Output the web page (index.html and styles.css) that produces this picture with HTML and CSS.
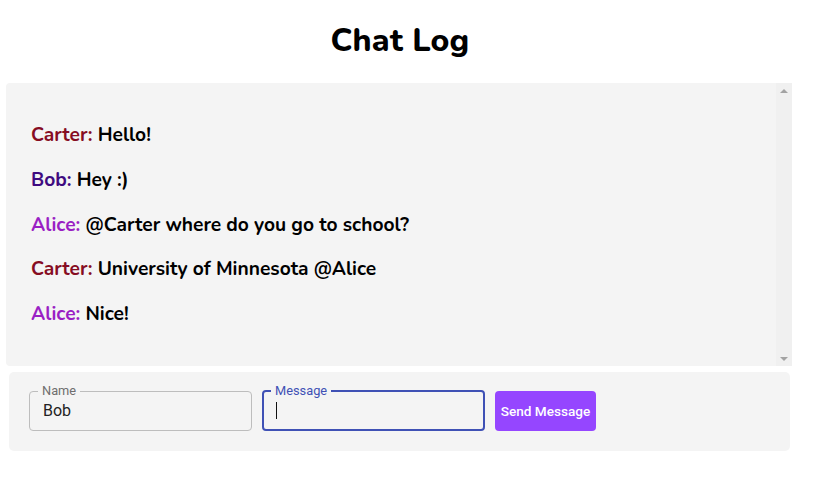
FILE: index.html
```html
<!DOCTYPE html>
<html>
<head>
<meta charset="utf-8">
<link rel="stylesheet" href="styles.css">
</head>
<body>
<div class="page">
  <h1 class="title">Chat Log</h1>
  <div class="log">
    <div class="messages">
      <p class="msg"><span class="who carter">Carter:</span> Hello!</p>
      <p class="msg"><span class="who bob">Bob:</span> Hey :)</p>
      <p class="msg"><span class="who alice">Alice:</span> @Carter where do you go to school?</p>
      <p class="msg"><span class="who carter">Carter:</span> University of Minnesota @Alice</p>
      <p class="msg"><span class="who alice">Alice:</span> Nice!</p>
    </div>
    <div class="scrollbar">
      <span class="arrow up"></span>
      <span class="arrow down"></span>
    </div>
  </div>
  <form class="composer">
    <fieldset class="field">
      <legend class="label">Name</legend>
      <span class="value">Bob</span>
    </fieldset>
    <fieldset class="field focused">
      <legend class="label">Message</legend>
      <span class="caret"></span>
    </fieldset>
    <button type="button" class="send">Send Message</button>
  </form>
</div>
</body>
</html>
```
FILE: styles.css
```css
html, body {
  margin: 0;
  padding: 0;
  background: #ffffff;
}
body {
  font-family: "Nunito", "Lato", "Noto Sans", sans-serif;
  color: #000;
}
.page {
  width: 800px;
  padding-top: 22px;
}
.title {
  margin: 0 0 24px 0;
  height: 37px;
  text-align: center;
  font-size: 32px;
  font-weight: 800;
  line-height: 37px;
  letter-spacing: 0.2px;
}
.log {
  margin-left: 6px;
  width: 786px;
  height: 283px;
  background: #f4f4f4;
  border-radius: 4px 0 0 4px;
  display: flex;
}
.messages {
  flex: 1;
  padding: 40px 0 0 25px;
}
.msg {
  margin: 0 0 20.75px 0;
  height: 24px;
  line-height: 24px;
  font-size: 19.2px;
  font-weight: 700;
}
.who.carter { color: #860c22; }
.who.bob { color: #3e0a80; }
.who.alice { color: #9a1fc4; }
.scrollbar {
  width: 16px;
  background: #f0f0f0;
  display: flex;
  flex-direction: column;
  justify-content: space-between;
  align-items: center;
  padding: 6px 0 5px;
  box-sizing: border-box;
}
.arrow {
  width: 0;
  height: 0;
  border-left: 4px solid transparent;
  border-right: 4px solid transparent;
}
.arrow.up { border-bottom: 4px solid #a3a3a3; }
.arrow.down { border-top: 4px solid #a3a3a3; }
.composer {
  margin: 6px 0 0 9px;
  width: 781px;
  height: 79px;
  background: #f4f4f4;
  border-radius: 5px;
  display: flex;
  align-items: flex-start;
  padding: 13px 0 0 20px;
  box-sizing: border-box;
  gap: 10px;
  font-family: "Roboto", "Liberation Sans", sans-serif;
}
.field {
  margin: 0;
  box-sizing: border-box;
  width: 223px;
  height: 46px;
  border: 1px solid #bdbdbd;
  border-radius: 4px;
  padding: 0 13px;
  display: flex;
  align-items: center;
}
.field.focused {
  border: 2px solid #3f51b5;
  padding: 0 12px;
}
.label {
  font-size: 12.8px;
  color: #6e6e6e;
  padding: 0 4px;
  margin-left: -5px;
  line-height: 12px;
}
.focused .label {
  color: #3f51b5;
  margin-left: -5px;
}
.value {
  font-size: 16px;
  color: #222;
  margin-top: -6px;
}
.caret {
  display: block;
  width: 1px;
  height: 17px;
  background: #111;
  margin-top: -6px;
}
.send {
  margin-top: 6px;
  height: 40px;
  width: 101px;
  border: none;
  border-radius: 4px;
  background: #9546ff;
  color: #fff;
  font-family: "Roboto", "Liberation Sans", sans-serif;
  font-size: 13.6px;
  font-weight: 500;
  padding: 0;
}
```
